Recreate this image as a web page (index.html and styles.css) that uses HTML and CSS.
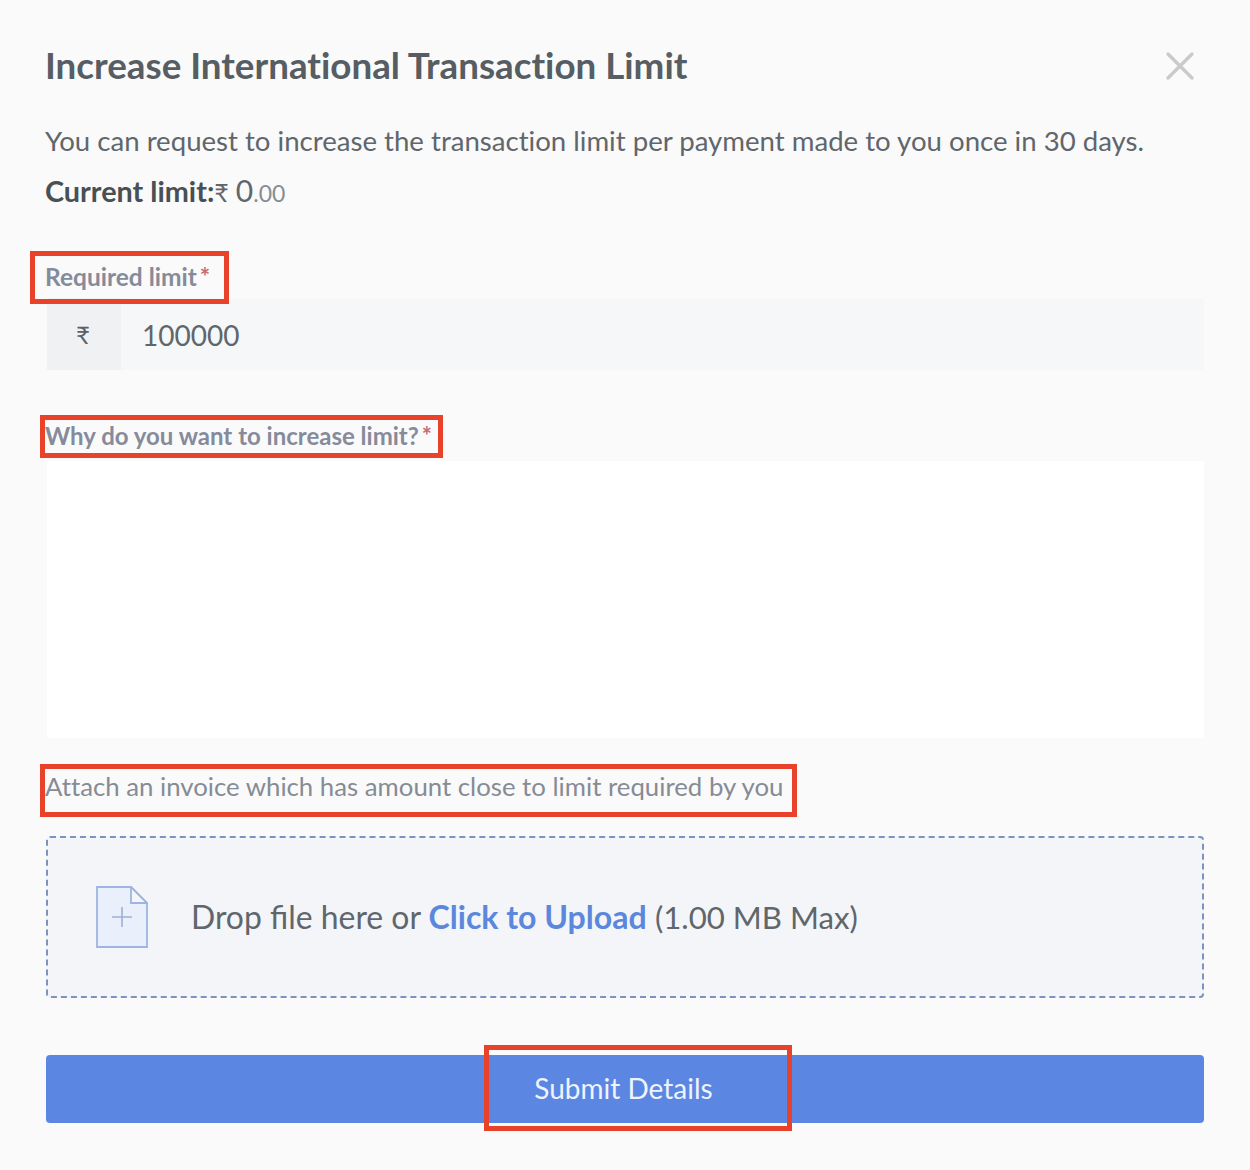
FILE: index.html
```html
<!DOCTYPE html>
<html lang="en">
<head>
    <meta charset="UTF-8">
    <title>Increase International Transaction Limit</title>
    <link rel="stylesheet" href="styles.css">
</head>
<body>
    <div class="modal">
        <div class="modal-header">
            <h1>Increase International Transaction Limit</h1>
            <svg class="close-icon" width="30" height="30" viewBox="0 0 30 30">
                <path d="M3 3L27 27M27 3L3 27" stroke="#c9cacb" stroke-width="3.4" stroke-linecap="round" fill="none"/>
            </svg>
        </div>
        <p class="intro">You can request to increase the transaction limit per payment made to you once in 30 days.</p>
        <p class="current"><strong>Current limit:</strong><span class="rupee">₹</span> <span class="whole">0</span><span class="paise">.00</span></p>

        <label class="field-label label-limit">Required limit<span class="req">*</span></label>
        <div class="amount-input">
            <span class="amount-prefix">₹</span>
            <span class="amount-value">100000</span>
        </div>

        <label class="field-label label-why">Why do you want to increase limit?<span class="req">*</span></label>
        <div class="reason-box"></div>

        <p class="attach-label">Attach an invoice which has amount close to limit required by you</p>
        <div class="dropzone">
            <svg class="file-icon" width="52" height="62" viewBox="0 0 52 62">
                <path d="M1 1H35L51 17V61H1Z" fill="#e9f0fb" stroke="#9db5e3" stroke-width="1.8"/>
                <path d="M35 1V17H51Z" fill="#f5f6f9" stroke="#9db5e3" stroke-width="1.8"/>
                <path d="M26 21V41M16 31H36" stroke="#9db0d8" stroke-width="1.6" fill="none"/>
            </svg>
            <span class="drop-text">Drop file here or <a class="upload-link">Click to Upload</a> <span class="drop-max">(1.00 MB Max)</span></span>
        </div>

        <button type="button" class="submit-btn">Submit Details</button>

        <div class="mark mark-limit"></div>
        <div class="mark mark-why"></div>
        <div class="mark mark-attach"></div>
        <div class="mark mark-submit"></div>
    </div>
</body>
</html>
```

FILE: styles.css
```css
* {
    box-sizing: border-box;
}

body {
    margin: 0;
    background-color: #fafafa;
    font-family: Lato, "DejaVu Sans", sans-serif;
    font-variant-ligatures: none;
    color: #5a6167;
}

.modal {
    position: relative;
    height: 1170px;
    padding: 0 46px;
    overflow: hidden;
}

.modal-header {
    display: flex;
    justify-content: space-between;
    align-items: center;
    height: 50px;
    margin-top: 41px;
    margin-left: -1px;
    padding-right: 9px;
}

h1 {
    margin: -2px 0 0;
    font-size: 36.75px;
    font-weight: 700;
    color: #565d63;
}

.intro {
    margin: 28px 0 0 -1px;
    font-size: 27.6px;
    line-height: 44px;
    color: #5f666c;
}

.current {
    margin: 5px 0 0 -1px;
    font-size: 27.6px;
    line-height: 44px;
    color: #5f666c;
}

.current strong {
    font-size: 28.8px;
    color: #484f55;
}

.rupee {
    font-size: 25px;
}

.whole {
    font-size: 30px;
}

.paise {
    font-size: 23px;
    color: #878c91;
}

.field-label {
    display: block;
    margin-left: -1px;
    font-size: 24px;
    font-weight: 700;
    line-height: 30px;
    color: #868b9b;
}

.req {
    color: #c96a72;
    margin-left: 3px;
}

.label-limit {
    margin-top: 47px;
    font-size: 24.5px;
}

.amount-input {
    display: flex;
    align-items: center;
    height: 72px;
    margin-top: 6px;
    margin-left: 1px;
    background-color: #f6f7f8;
}

.amount-prefix {
    width: 74px;
    height: 100%;
    display: flex;
    align-items: center;
    justify-content: center;
    padding-right: 2px;
    font-size: 24px;
    background-color: #f0f1f3;
}

.amount-value {
    margin-left: 21px;
    padding-top: 2px;
    font-size: 28px;
    color: #5f666c;
}

.label-why {
    margin-top: 51px;
}

.reason-box {
    height: 277px;
    margin-top: 10px;
    margin-left: 1px;
    background-color: #fff;
}

.attach-label {
    margin: 30px 0 0 -1px;
    font-size: 25.77px;
    line-height: 36px;
    color: #868b95;
}

.dropzone {
    display: flex;
    align-items: center;
    height: 162px;
    margin-top: 32px;
    padding-left: 48px;
    background-color: #f4f5f8;
    border: 2px dashed #7d92bd;
    border-radius: 4px;
}

.drop-text {
    margin-left: 43px;
    padding-bottom: 2px;
    font-size: 31.9px;
    font-variant-ligatures: normal;
    color: #5f666c;
}

.upload-link {
    font-size: 32.1px;
    font-weight: 700;
    color: #5b87dc;
}

.drop-max {
    font-size: 31.2px;
}

.submit-btn {
    display: block;
    width: 100%;
    height: 68px;
    margin-top: 57px;
    padding: 0 9px 3px 6px;
    border: none;
    border-radius: 4px;
    background-color: #5b87e3;
    color: #eef3fd;
    font-family: Lato, sans-serif;
    font-size: 28px;
}

/* red annotation boxes drawn over the form */
.mark {
    position: absolute;
    border: 5px solid #e8432a;
}

.mark-limit {
    left: 30px;
    top: 251px;
    width: 199px;
    height: 53px;
}

.mark-why {
    left: 40px;
    top: 415px;
    width: 403px;
    height: 43px;
}

.mark-attach {
    left: 40px;
    top: 764px;
    width: 757px;
    height: 53px;
}

.mark-submit {
    left: 484px;
    top: 1045px;
    width: 308px;
    height: 86px;
}
```
